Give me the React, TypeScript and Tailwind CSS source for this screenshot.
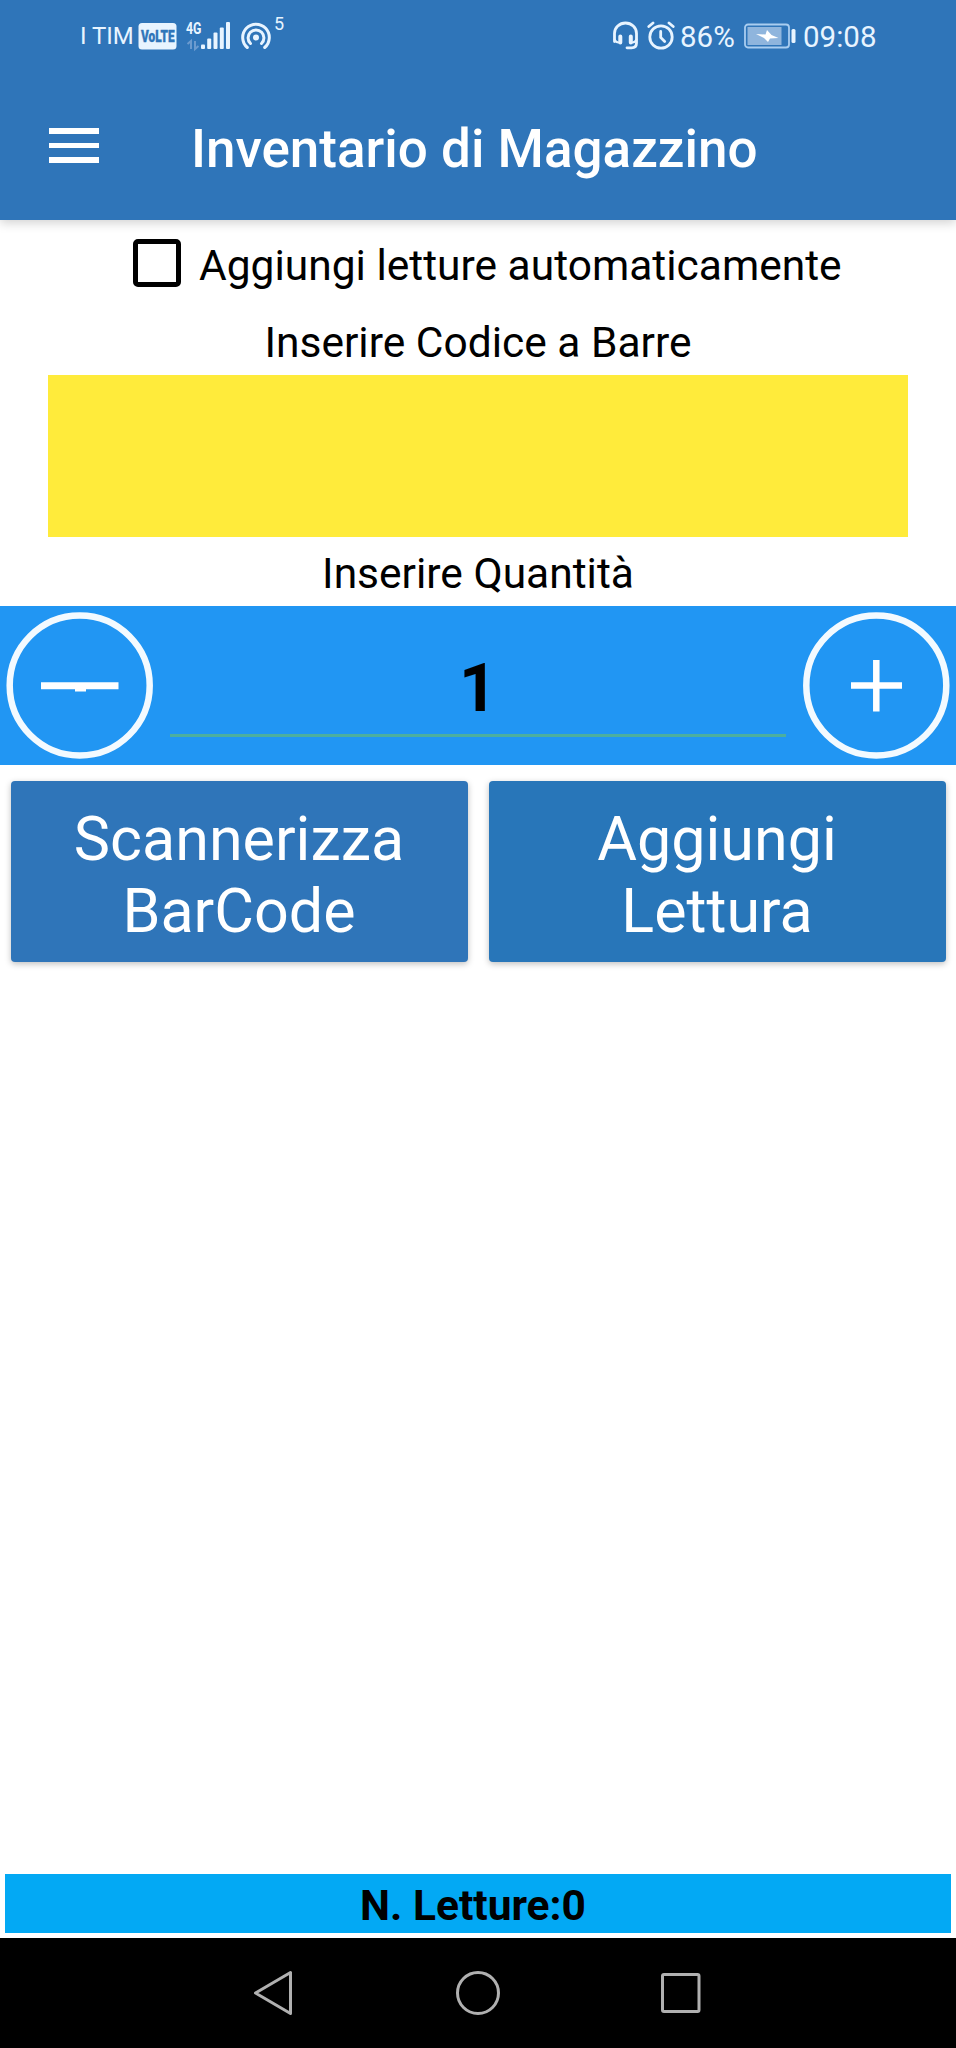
import { useState } from "react";

function StatusBar() {
  return (
    <div className="h-[70px] flex items-start justify-between pl-[80px] pr-[77px] text-[#e8f4ff]">
      <div className="flex items-start">
        <span className="mt-[17px] w-[58px] text-[24px] leading-[38px] whitespace-nowrap">I TIM</span>

        {/* VoLTE badge */}
        <svg className="mt-[23px] overflow-visible" width="39" height="27" viewBox="0 0 39 27">
          <rect x="0.5" y="0" width="38" height="26.5" rx="3.5" fill="#e8f4ff" />
          <text x="3" y="19" textLength="33.500" lengthAdjust="spacingAndGlyphs" fontSize="17" fontWeight="900" fill="#2f75b9" stroke="#2f75b9" strokeWidth="0.400">
            VoLTE
          </text>
        </svg>

        {/* Signal strength */}
        <svg className="ml-[9px] mt-[20px] overflow-visible" width="46" height="30" viewBox="0 0 46 30">
          <text x="0" y="14" textLength="15.500" lengthAdjust="spacingAndGlyphs" fontSize="16.500" fontWeight="700" fill="#e8f4ff">
            4G
          </text>
          <path d="M5 29V21l-3.5 3M9 21v8l3.500-3" fill="none" stroke="#6c9bcf" strokeWidth="2" />
          <g fill="#e8f4ff">
            <rect x="15" y="24.500" width="4" height="4.500" rx="1" />
            <rect x="21.200" y="18.500" width="4" height="10.500" rx="1" />
            <rect x="27.500" y="12.500" width="4" height="16.500" rx="1" />
            <rect x="33.800" y="7.500" width="4" height="21.500" rx="1" />
            <rect x="40" y="2" width="4" height="27" rx="1" />
          </g>
        </svg>

        {/* Hotspot */}
        <svg className="ml-[8px] mt-[21px]" width="32" height="30" viewBox="0 0 32 30" fill="none" stroke="#e8f4ff" strokeWidth="3" strokeLinecap="round">
          <path d="M7.300 26.500A13.300 13.300 0 1 1 24.700 26.500" />
          <path d="M10.500 22.500A7.900 7.900 0 1 1 21.500 22.500" />
          <circle cx="16" cy="16.500" r="3" fill="#e8f4ff" stroke="none" />
        </svg>
        <span className="ml-[2px] mt-[13px] text-[18px] leading-[22px]">5</span>
      </div>

      <div className="flex items-start">
        {/* Headset */}
        <svg className="mt-[21px]" width="27" height="29" viewBox="0 0 27 29" fill="none" stroke="#e8f4ff" strokeWidth="2.800" strokeLinecap="round">
          <path d="M2.500 20.500V12.500a11 10.500 0 0 1 22 0V22c0 3.500-2 4.800-5 4.800h-4.500" />
          <path d="M8.300 15.500v6M18.800 15.500v6" strokeWidth="4" />
          <path d="M2.500 18.500c1 2 2 3 4 3M24.500 18.500c-1 2-2 3-4 3" strokeWidth="2" />
        </svg>

        {/* Alarm */}
        <svg className="ml-[8px] mt-[21px]" width="28" height="29" viewBox="0 0 28 29" fill="none" stroke="#e8f4ff" strokeWidth="2.800" strokeLinecap="round">
          <circle cx="14" cy="16" r="11.200" />
          <path d="M13.700 10.500V16.500l4 4" />
          <path d="M1.800 5.500 6 2M26.200 5.500 22 2" />
        </svg>

        <span className="w-[64px] ml-[5px] mt-[19px] text-[29.500px] leading-[36px]">86%</span>

        {/* Battery */}
        <svg className="mt-[23px]" width="52" height="26" viewBox="0 0 52 26">
          <rect x="1" y="1.500" width="44" height="23" rx="3" fill="none" stroke="#a9cdf0" strokeWidth="1.800" />
          <rect x="3.500" y="4" width="34" height="18" fill="#8fb5dd" />
          <path d="M12 11l9.500 0.500 1.500-4.500 4.500 5 7 3-8.500 0.500-2 3.500-4-4z" fill="#fff" />
          <rect x="47.500" y="6" width="4" height="14" rx="1.500" fill="#e8f4ff" />
        </svg>
        <span className="ml-[7px] mt-[19px] w-[76px] text-[29.500px] leading-[36px]">09:08</span>
      </div>
    </div>
  );
}

function AppBar() {
  return (
    <div className="h-[150px] flex items-start">
      <button aria-label="Menu" className="mt-[58px] ml-[49px] w-[50px] flex flex-col gap-[9px]">
        <span className="h-[5.500px] bg-white" />
        <span className="h-[5.500px] bg-white" />
        <span className="h-[5.500px] bg-white" />
      </button>
      <h1 className="mt-[48px] ml-[92px] text-[53px] leading-[62px] font-medium text-white whitespace-nowrap">
        Inventario di Magazzino
      </h1>
    </div>
  );
}

function NavBar() {
  return (
    <div className="h-[110px] bg-black flex items-center">
      <svg className="ml-[250px]" width="46" height="50" viewBox="0 0 46 50" fill="none" stroke="#b0b0b0" strokeWidth="3" strokeLinejoin="round">
        <path d="M40.500 4.500V45.500L5.500 25z" />
      </svg>
      <svg className="ml-[157px]" width="50" height="50" viewBox="0 0 50 50" fill="none" stroke="#b0b0b0" strokeWidth="3">
        <circle cx="25" cy="25" r="20.500" />
      </svg>
      <svg className="ml-[153px]" width="50" height="50" viewBox="0 0 50 50" fill="none" stroke="#b0b0b0" strokeWidth="3">
        <rect x="6.500" y="6.500" width="36.500" height="37" rx="1.500" />
      </svg>
    </div>
  );
}

export default function App() {
  const [auto, setAuto] = useState(false);
  const [quantity, setQuantity] = useState(1);

  return (
    <div className="w-[956px] h-[2048px] flex flex-col overflow-hidden bg-white text-black font-['Roboto',sans-serif]">
      <header className="bg-[#2f75b9] shadow-[0_3px_10px_rgba(0,0,0,0.18)]">
        <StatusBar />
        <AppBar />
      </header>

      <main className="flex-1 flex flex-col">
        <label className="h-[90px] flex items-start pl-[133px]">
          <input
            type="checkbox"
            checked={auto}
            onChange={(e) => setAuto(e.target.checked)}
            className="appearance-none mt-[19px] w-[48px] h-[48px] border-[5px] border-black rounded-[5px] checked:bg-black"
          />
          <span className="mt-[21px] ml-[18px] text-[42.500px] leading-[50px] whitespace-nowrap">
            Aggiungi letture automaticamente
          </span>
        </label>

        <p className="h-[65px] pt-[8px] text-[42.500px] leading-[50px] text-center">Inserire Codice a Barre</p>
        <input aria-label="Codice a Barre" className="mx-[48px] h-[162px] bg-[#ffeb3b] text-[42.500px] text-center outline-none" />
        <p className="h-[69px] pt-[12px] text-[42.500px] leading-[50px] text-center">Inserire Quantità</p>

        {/* Quantity stepper */}
        <div className="h-[159px] bg-[#2196f3] flex items-start">
          <button aria-label="Meno" className="w-[160px] h-[159px]" onClick={() => setQuantity(quantity - 1)}>
            <svg width="160" height="159" viewBox="0 0 160 159">
              <circle cx="79.700" cy="79.500" r="70" fill="none" stroke="#f3faff" strokeWidth="6.500" />
              <path d="M41 76.300h77.500v6.900H86v2.300H75v-2.300H41z" fill="#fff" />
            </svg>
          </button>
          <div className="mx-[10px] h-[131px] flex-1 border-b-[3px] border-[#4caf9f] text-center text-[66px] font-bold">
            <span className="block pt-[44px] leading-[78px]">{quantity}</span>
          </div>
          <button aria-label="Più" className="w-[160px] h-[159px]" onClick={() => setQuantity(quantity + 1)}>
            <svg width="160" height="159" viewBox="0 0 160 159">
              <circle cx="80.300" cy="79.500" r="70" fill="none" stroke="#f3faff" strokeWidth="6.500" />
              <path d="M55 79.500h51M80.300 54v51.500" stroke="#fff" strokeWidth="6.500" />
            </svg>
          </button>
        </div>

        <div className="mt-[16px] px-[10.500px] flex gap-[21px] text-[61px] leading-[72px] text-white">
          <button className="h-[181px] flex-1 pt-[6px] bg-[#2f75b9] rounded-[4px] shadow-[0_2px_6px_rgba(0,0,0,0.25)]">
            Scannerizza
            <br />
            BarCode
          </button>
          <button className="h-[181px] flex-1 pt-[6px] bg-[#2876b9] rounded-[4px] shadow-[0_2px_6px_rgba(0,0,0,0.25)]">
            Aggiungi
            <br />
            Lettura
          </button>
        </div>
      </main>

      <div className="mx-[5px] mb-[5px] h-[59px] bg-[#03a9f4] text-[42.500px] leading-[64px] font-bold text-center">
        <span className="mr-[10px]">N. Letture:0</span>
      </div>
      <NavBar />
    </div>
  );
}
